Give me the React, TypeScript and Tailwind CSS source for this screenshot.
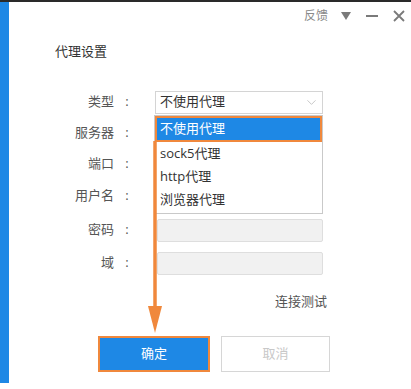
import { ChevronDown } from "lucide-react";

const font = { fontFamily: '"Open Sans", "Noto Sans CJK SC", sans-serif' };

const rows = [
    { label: "类型", mt: "mt-0", kind: "select" },
    { label: "服务器", mt: "mt-[8px]", kind: "input" },
    { label: "端口", mt: "mt-[8px]", kind: "input" },
    { label: "用户名", mt: "mt-[9px]", kind: "input" },
    { label: "密码", mt: "mt-[11px]", kind: "input" },
    { label: "域", mt: "mt-[10px]", kind: "input" },
];

const options = ["不使用代理", "sock5代理", "http代理", "浏览器代理"];

function Label({ text }: { text: string }) {
    return (
        <div className="w-[125px] flex justify-end items-center text-[13px] text-[#555]">
            <span>{text}</span>
            <span className="w-[14px] ml-[6px] text-center">:</span>
        </div>
    );
}

export default function App() {
    return (
        <div style={font} className="w-[411px] h-[389px] bg-white border-t-2 border-[#2a2a2a] overflow-hidden">
            <div className="flex h-[381px]">
                {/* left accent strip */}
                <div className="w-[9px] bg-[#1e88e5]" />

                <div className="flex-1 relative">
                    {/* window controls */}
                    <div className="flex justify-end items-center h-[28px] pr-[6px] text-[#8a8a8a]">
                        <span className="text-[12px] mr-[12px]">反馈</span>
                        <svg width="12" height="10" viewBox="0 0 12 10" className="mr-[13px]">
                            <path d="M1 1 L11 1 L6 9 Z" fill="#7a7a7a" />
                        </svg>
                        <svg width="14" height="14" viewBox="0 0 14 14" className="mr-[14px]">
                            <path d="M1 7 H13" stroke="#7a7a7a" strokeWidth="2" />
                        </svg>
                        <svg width="12" height="12" viewBox="0 0 12 12">
                            <path d="M1 1 L11 11 M11 1 L1 11" stroke="#7a7a7a" strokeWidth="1.8" />
                        </svg>
                    </div>

                    {/* title */}
                    <div className="pl-[46px] mt-[12px] text-[13px] text-[#333]">代理设置</div>

                    {/* form */}
                    <div className="mt-[29px]">
                        {rows.map((r) => (
                            <div key={r.label} className={`flex items-center h-[23px] ${r.mt}`}>
                                <Label text={r.label} />
                                {r.kind === "select" ? (
                                    <div className="ml-[21px] w-[168px] h-[23px] border border-[#d4d4d4] bg-white flex items-center justify-between pl-[4px] pr-[3px] text-[13px] text-[#333]">
                                        <span>不使用代理</span>
                                        <ChevronDown size={15} strokeWidth={1.2} color="#b5b5b5" />
                                    </div>
                                ) : (
                                    <div className="ml-[23px] w-[166px] h-[23px] border border-[#dedede] rounded-[2px] bg-[#f1f1f1]" />
                                )}
                            </div>
                        ))}
                    </div>

                    <div className="flex justify-end pr-[84px] mt-[17px] text-[13px] text-[#555]">连接测试</div>

                    {/* buttons */}
                    <div className="flex pl-[89px] mt-[25px] gap-[11px]">
                        <div className="w-[112px] h-[36px] bg-[#1e88e5] border-2 border-[#f0883c] flex items-center justify-center text-white text-[13px]">
                            确定
                        </div>
                        <div className="w-[109px] h-[36px] bg-white border border-[#d6d6d6] flex items-center justify-center text-[#c8c8c8] text-[13px]">
                            取消
                        </div>
                    </div>

                    {/* open dropdown */}
                    <div className="absolute left-[145px] top-[113px] w-[169px] h-[99px] bg-white border border-[#c9c9c9] text-[13px] text-[#333]">
                        <div className="h-[26px] bg-[#1e88e5] border-2 border-[#f0883c] flex items-center pl-[3px] text-white">
                            {options[0]}
                        </div>
                        {options.slice(1).map((o) => (
                            <div key={o} className="h-[23px] flex items-center pl-[5px]">
                                {o}
                            </div>
                        ))}
                    </div>

                    {/* annotation arrow */}
                    <svg className="absolute left-[136px] top-[139px]" width="20" height="194" viewBox="0 0 20 194">
                        <path d="M10 0 V170" stroke="#f0883c" strokeWidth="3.5" />
                        <path d="M3 165 L17 165 L10 192 Z" fill="#f0883c" />
                    </svg>
                </div>
            </div>
        </div>
    );
}
